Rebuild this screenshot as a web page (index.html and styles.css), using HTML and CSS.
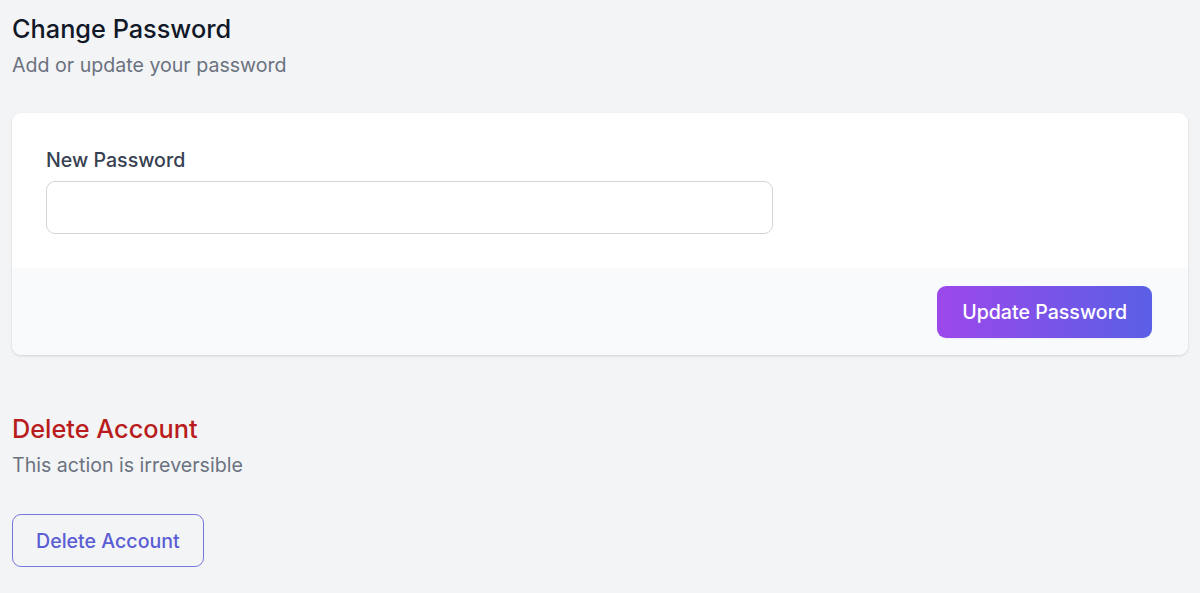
FILE: index.html
```html
<!DOCTYPE html>
<html lang="en">
<head>
<meta charset="utf-8">
<title>Account Settings</title>
<link rel="stylesheet" href="styles.css">
</head>
<body>
<main class="page">
  <section class="section">
    <h2 class="section-title">Change Password</h2>
    <p class="section-desc">Add or update your password</p>
    <form class="card">
      <div class="card-body">
        <div class="field">
          <label class="field-label" for="new-password">New Password</label>
          <input class="field-input" id="new-password" type="password">
        </div>
      </div>
      <div class="card-footer">
        <button type="button" class="btn-primary">Update Password</button>
      </div>
    </form>
  </section>
  <section class="section danger">
    <h2 class="section-title danger-title">Delete Account</h2>
    <p class="section-desc">This action is irreversible</p>
    <button type="button" class="btn-outline">Delete Account</button>
  </section>
</main>
</body>
</html>
```

FILE: styles.css
```css
* { box-sizing: border-box; }
html, body {
  margin: 0;
  padding: 0;
  background: #f3f4f6;
  font-family: Inter, "Noto Sans", "Liberation Sans", sans-serif;
}
.page {
  padding: 11px 12px 0 12px;
}
.section-title {
  margin: 0;
  font-size: 25.3px;
  line-height: 36px;
  font-weight: 500;
  color: #111827;
}
.section-desc {
  margin: 3px 0 0 0;
  font-size: 19.6px;
  line-height: 31.5px;
  color: #6b7280;
}
.card {
  margin-top: 31px;
  background: #ffffff;
  border-radius: 9px;
  box-shadow: 0 1px 3px rgba(0,0,0,0.10), 0 1px 2px rgba(0,0,0,0.06);
  overflow: hidden;
}
.card-body {
  padding: 32px 34px 34px 34px;
  display: grid;
  grid-template-columns: repeat(6, 1fr);
  column-gap: 36px;
}
.field {
  grid-column: span 4;
  display: flex;
  flex-direction: column;
}
.field-label {
  font-size: 19.6px;
  line-height: 30px;
  font-weight: 500;
  color: #374151;
}
.field-input {
  margin-top: 6px;
  height: 53px;
  border: 1.5px solid #d1d5db;
  border-radius: 9px;
  background: #ffffff;
  font: inherit;
  font-size: 19.6px;
  padding: 0 18px;
  outline: none;
}
.card-footer {
  background: #f9fafb;
  padding: 18px 36px 17px 36px;
  display: flex;
  justify-content: flex-end;
}
.btn-primary {
  height: 52px;
  padding: 0 25px;
  border: none;
  border-radius: 9px;
  background: linear-gradient(to right, #9c48eb, #5a5fe6);
  color: #ffffff;
  font-family: inherit;
  font-size: 19.6px;
  font-weight: 500;
  box-shadow: 0 1px 2px rgba(0,0,0,0.05);
  cursor: pointer;
}
.danger {
  margin-top: 56px;
}
.danger-title {
  color: #b91c1c;
}
.btn-outline {
  margin-top: 33px;
  height: 53px;
  padding: 0 23px;
  border: 1.5px solid #7577d9;
  border-radius: 9px;
  background: transparent;
  color: #5b5dd4;
  font-family: inherit;
  font-size: 19.6px;
  font-weight: 500;
  cursor: pointer;
}
```
